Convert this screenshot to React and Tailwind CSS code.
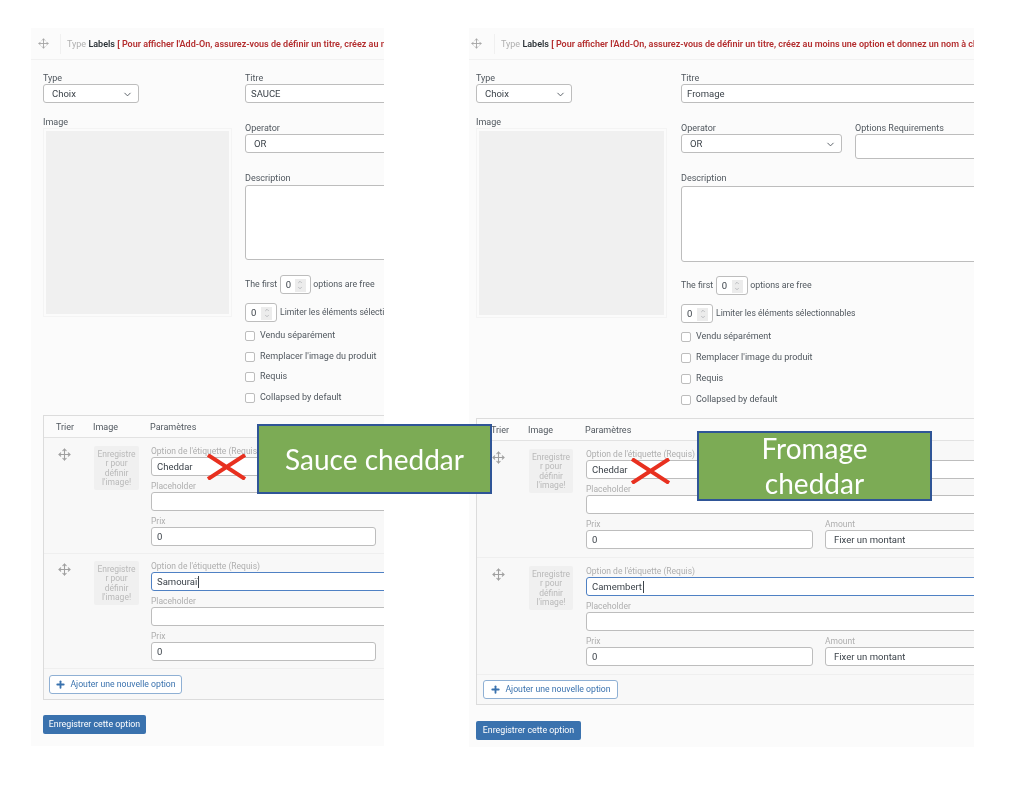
import React from 'react';
import { ChevronDown, ChevronUp, Move, Plus } from 'lucide-react';

const Label = ({ children, muted }) => (
  <p className={muted ? 'h-[11px] text-[8.5px] leading-[11px] text-[#aeaeae]' : 'h-[11px] text-[9px] leading-[11px] text-[#50575e]'}>
    {children}
  </p>
);

const Box = ({ children, className, focus }) => (
  <div
    className={`flex items-center rounded-[3px] border bg-white pl-[5px] pt-px text-[9.5px] text-[#3c434a] ${
      focus ? 'border-[#4f81c4]' : 'border-[#bdbdbd]'
    } ${className}`}
  >
    {children}
  </div>
);

const Select = ({ value, className }) => (
  <Box className={`justify-between pl-[8px] pr-[5px] ${className}`}>
    {value}
    <ChevronDown className="w-[11px] h-[11px] text-[#50575e]" />
  </Box>
);

const NumberBox = ({ className }) => (
  <div className={`flex shrink-0 items-center justify-between rounded-[3px] border border-[#bdbdbd] bg-white pl-[5px] pr-[4px] pt-px text-[9.5px] text-[#3c434a] ${className}`}>
    0
    <span className="flex h-[13px] w-[11px] flex-col items-center justify-center bg-[#ececec] text-[#8c8f94]">
      <ChevronUp className="h-[6px] w-[8px]" />
      <ChevronDown className="h-[6px] w-[8px]" />
    </span>
  </div>
);

const Check = ({ label }) => (
  <div className="flex h-[12px] items-center gap-[5px] text-[9px] text-[#50575e]">
    <span className="h-[10px] w-[10px] rounded-[2px] border border-[#bdbdbd] bg-white" />
    {label}
  </div>
);

const Header = ({ text, className, dividerClass }) => (
  <div className="flex h-[32px] items-center border-b border-[#f1f1f1]">
    <Move className={`h-[11px] w-[11px] shrink-0 text-[#a5a5a5] ${className}`} strokeWidth={2} />
    <span className={`mr-[6px] h-[20px] w-px shrink-0 bg-[#f0f0f0] ${dividerClass}`} />
    <p className="whitespace-nowrap pt-[2px] text-[9px] text-[#b0b0b0]">
      Type <b className="font-semibold text-[#2c3338]">Labels</b>{' '}
      <span className="font-semibold text-[#b32d2e]">{text}</span>
    </p>
  </div>
);

const ImageNote = ({ className }) => (
  <div className={`shrink-0 rounded-[2px] bg-[#f0f0f0] py-[4px] text-center text-[8.5px] leading-[9.3px] text-[#b9b9b9] ${className}`}>
    Enregistre
    <br />r pour
    <br />définir
    <br />l'image!
  </div>
);

const Caret = () => <span className="ml-px inline-block h-[12px] w-px bg-[#3c434a]" />;

const LeftRow = ({ value, caret, className }) => (
  <div className={`flex border-b border-[#efefef] pb-[7px] pl-[14px] ${className}`}>
    <Move className="mt-[2px] h-[13px] w-[13px] shrink-0 text-[#a0a0a0]" />
    <ImageNote className="ml-[23px] mr-[12px] h-[44px] w-[45px]" />
    <div className="w-[400px]">
      <Label muted>Option de l'étiquette (Requis)</Label>
      <Box className="h-[19px]" focus={caret}>
        {value}
        {caret && <Caret />}
      </Box>
      <div className="mt-[5px]">
        <Label muted>Placeholder</Label>
      </div>
      <Box className="h-[19px]" />
      <div className="mt-[5px]">
        <Label muted>Prix</Label>
      </div>
      <Box className="h-[19px] w-[225px]">0</Box>
    </div>
  </div>
);

const RightRow = ({ value, caret }) => (
  <div className="flex border-b border-[#efefef] pl-[15px] pt-[8px] pb-[8px]">
    <Move className="mt-[2px] h-[13px] w-[13px] shrink-0 text-[#a0a0a0]" />
    <ImageNote className="ml-[24px] mr-[13px] h-[44px] w-[44px]" />
    <div className="w-[500px]">
      <Label muted>Option de l'étiquette (Requis)</Label>
      <Box className="h-[19px]" focus={caret}>
        {value}
        {caret && <Caret />}
      </Box>
      <div className="mt-[5px]">
        <Label muted>Placeholder</Label>
      </div>
      <Box className="h-[19px]" />
      <div className="mt-[5px] flex gap-[12px]">
        <div className="w-[227px]">
          <Label muted>Prix</Label>
          <Box className="h-[19px]">0</Box>
        </div>
        <div className="flex-1">
          <Label muted>Amount</Label>
          <Box className="h-[19px] pl-[8px]">Fixer un montant</Box>
        </div>
      </div>
    </div>
  </div>
);

const AddButton = ({ className }) => (
  <div className={`flex h-[19px] items-center justify-center gap-[4px] whitespace-nowrap rounded-[3px] border border-[#8fb0d4] bg-white text-[8.7px] text-[#3a72ae] ${className}`}>
    <Plus className="h-[11px] w-[11px] shrink-0" strokeWidth={4} />
    Ajouter une nouvelle option
  </div>
);

const SaveButton = ({ className }) => (
  <div className={`flex h-[19px] items-center justify-center whitespace-nowrap rounded-[2px] bg-[#3a72ae] text-[8.8px] text-white ${className}`}>
    Enregistrer cette option
  </div>
);

const TableHead = ({ className }) => (
  <div className={`flex h-[22px] items-center border-b border-[#e2e2e2] bg-[#fbfbfb] pt-[2px] text-[9px] text-[#50575e] ${className}`}>
    <span className="w-[37px]">Trier</span>
    <span className="w-[57px]">Image</span>
    <span>Paramètres</span>
  </div>
);

const LeftPanel = () => (
  <section className="h-[718px] w-[353px] shrink-0 overflow-hidden bg-[#fbfbfb]">
    <Header
      className="ml-[7px]"
      dividerClass="ml-[11px]"
      text="[ Pour afficher l'Add-On, assurez-vous de définir un titre, créez au moins une option et donnez un nom à chacune ]"
    />
    <div className="pl-[12px] pt-[13px]">
      <div className="flex">
        <div className="w-[202px] shrink-0">
          <Label>Type</Label>
          <Select value="Choix" className="h-[19px] w-[96px]" />
          <div className="mt-[14px]">
            <Label>Image</Label>
          </div>
          <div className="h-[189px] w-[189px] border border-[#f4f4f4] p-[2px]">
            <div className="h-full w-full bg-[#f0f0f0]" />
          </div>
        </div>
        <div className="w-[300px] shrink-0">
          <Label>Titre</Label>
          <Box className="h-[19px]">SAUCE</Box>
          <div className="mt-[20px]">
            <Label>Operator</Label>
          </div>
          <Box className="h-[19px] pl-[8px]">OR</Box>
          <div className="mt-[20px]">
            <Label>Description</Label>
          </div>
          <Box className="mt-px h-[75px]" />
          <div className="mt-[15px] flex items-center gap-[2.5px] text-[8.8px] text-[#50575e]">
            The first
            <NumberBox className="h-[19px] w-[31px]" />
            options are free
          </div>
          <div className="mt-[9px] flex items-center gap-[3px] whitespace-nowrap text-[8.6px] text-[#50575e]">
            <NumberBox className="h-[19px] w-[32px]" />
            Limiter les éléments sélectionnables
          </div>
          <div className="mt-[8px] flex flex-col gap-[8.5px]">
            <Check label="Vendu séparément" />
            <Check label="Remplacer l'image du produit" />
            <Check label="Requis" />
            <Check label="Collapsed by default" />
          </div>
        </div>
      </div>
      <div className="mt-[11.5px] w-[500px] border border-[#dcdcdc] bg-[#f8f8f8]">
        <TableHead className="pl-[12px]" />
        <LeftRow value="Cheddar" className="pt-[8px]" />
        <LeftRow value="Samouraï" caret className="pt-[7px]" />
        <div className="h-[30px] pl-[5px] pt-[6px]">
          <AddButton className="w-[133px]" />
        </div>
      </div>
      <SaveButton className="mt-[15px] w-[103px]" />
    </div>
  </section>
);

const RightPanel = () => (
  <section className="ml-[85px] h-[719px] w-[505px] shrink-0 overflow-hidden bg-[#fbfbfb]">
    <Header
      className="ml-[2px]"
      dividerClass="ml-[12px]"
      text="[ Pour afficher l'Add-On, assurez-vous de définir un titre, créez au moins une option et donnez un nom à chacune ]"
    />
    <div className="pl-[7px] pt-[13px]">
      <div className="flex">
        <div className="w-[205px] shrink-0">
          <Label>Type</Label>
          <Select value="Choix" className="h-[19px] w-[96px]" />
          <div className="mt-[14px]">
            <Label>Image</Label>
          </div>
          <div className="h-[190px] w-[191px] border border-[#f4f4f4] p-[2px]">
            <div className="h-full w-full bg-[#f0f0f0]" />
          </div>
        </div>
        <div className="w-[400px] shrink-0">
          <Label>Titre</Label>
          <Box className="h-[19px]">Fromage</Box>
          <div className="mt-[20px] flex gap-[13px]">
            <div className="w-[161px]">
              <Label>Operator</Label>
              <Select value="OR" className="h-[19px]" />
            </div>
            <div className="flex-1">
              <Label>Options Requirements</Label>
              <Box className="h-[25px]" />
            </div>
          </div>
          <div className="mt-[14px]">
            <Label>Description</Label>
          </div>
          <Box className="mt-[2px] h-[76px]" />
          <div className="mt-[14px] flex items-center gap-[2.5px] text-[8.8px] text-[#50575e]">
            The first
            <NumberBox className="h-[19px] w-[32px]" />
            options are free
          </div>
          <div className="mt-[9px] flex items-center gap-[3px] whitespace-nowrap text-[8.6px] text-[#50575e]">
            <NumberBox className="h-[19px] w-[32px]" />
            Limiter les éléments sélectionnables
          </div>
          <div className="mt-[8px] flex flex-col gap-[9px]">
            <Check label="Vendu séparément" />
            <Check label="Remplacer l'image du produit" />
            <Check label="Requis" />
            <Check label="Collapsed by default" />
          </div>
        </div>
      </div>
      <div className="mt-[12px] w-[600px] border border-[#dcdcdc] bg-[#f8f8f8]">
        <TableHead className="pl-[14px]" />
        <RightRow value="Cheddar" />
        <RightRow value="Camembert" caret />
        <div className="h-[29px] pl-[6px] pt-[5px]">
          <AddButton className="w-[135px]" />
        </div>
      </div>
      <SaveButton className="mt-[16px] w-[105px]" />
    </div>
  </section>
);

const RedCross = ({ className }) => (
  <svg viewBox="0 0 39 26" className={`absolute h-[26px] w-[39px] ${className}`}>
    <path d="M1 1 38 25M1 25 38 1" stroke="#e8301f" strokeWidth="4" fill="none" />
  </svg>
);

const Callout = ({ children, className }) => (
  <div className={`absolute flex items-center justify-center border-2 border-[#2f5597] bg-[#7cab55] text-center text-[28px] leading-[35px] text-white [font-family:Lato,sans-serif] ${className}`}>
    {children}
  </div>
);

export default function App() {
  return (
    <div className="relative flex h-[795px] items-start overflow-hidden bg-white pl-[31px] pt-[28px] blur-[0.4px] [font-family:Roboto,sans-serif]">
      <LeftPanel />
      <RightPanel />
      <RedCross className="left-[207px] top-[454px]" />
      <RedCross className="left-[631px] top-[458px]" />
      <Callout className="left-[257px] top-[424px] h-[70px] w-[235px]">Sauce cheddar</Callout>
      <Callout className="left-[697px] top-[431px] h-[70px] w-[235px]">
        Fromage
        <br />
        cheddar
      </Callout>
    </div>
  );
}
